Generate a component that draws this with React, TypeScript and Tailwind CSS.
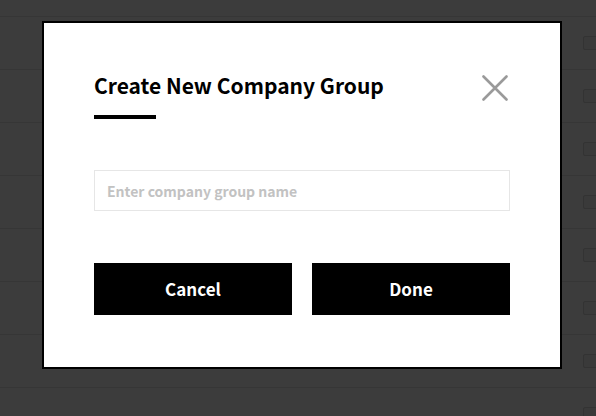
import { useState } from "react";

function BackgroundRow() {
  return (
    <div className="h-[53px] border-b border-[#363636] flex items-center justify-end">
      <div className="h-[14px] w-[16px] mr-[-3px] rounded-[2px] border border-[#333333] bg-[#3a3a3a]" />
    </div>
  );
}

function CreateGroupModal() {
  const [name, setName] = useState("");
  return (
    <div className="absolute left-[42px] top-[21px] w-[520px] h-[348px] border-2 border-black bg-white px-[50px] pt-[46px]">
      <div className="flex items-start justify-between">
        <div>
          <h2 className="text-[21px] leading-[32px] font-bold text-black">
            Create New Company Group
          </h2>
          <div className="mt-[14px] h-[4px] w-[62px] bg-black" />
        </div>
        <button className="mt-[6px] mr-[2px] text-[#9a9a9a]" aria-label="Close">
          <svg width="26" height="26" viewBox="0 0 26 26" fill="none">
            <path d="M1.5 1.5 L24.5 24.5 M24.5 1.5 L1.5 24.5" stroke="currentColor" strokeWidth="2.6" strokeLinecap="round" />
          </svg>
        </button>
      </div>

      <input
        value={name}
        onChange={(e) => setName(e.target.value)}
        placeholder="Enter company group name"
        className="mt-[51px] block w-full h-[41px] border border-[#e6e6e6] px-[12px] text-[14px] font-semibold text-black placeholder:text-[#c2c2c2] outline-none"
      />

      <div className="mt-[52px] flex gap-[20px]">
        <button className="h-[52px] flex-1 bg-black text-white text-[17px] font-bold">Cancel</button>
        <button className="h-[52px] flex-1 bg-black text-white text-[17px] font-bold">Done</button>
      </div>
    </div>
  );
}

export default function App() {
  return (
    <div
      className="relative h-[416px] w-[596px] overflow-hidden bg-[#3c3c3c]"
      style={{ fontFamily: '"Noto Sans CJK KR", "Noto Sans", sans-serif' }}
    >
      <div className="h-[17px] border-b border-[#363636]" />
      {Array.from({ length: 8 }).map((_, i) => (
        <BackgroundRow key={i} />
      ))}
      <CreateGroupModal />
    </div>
  );
}
